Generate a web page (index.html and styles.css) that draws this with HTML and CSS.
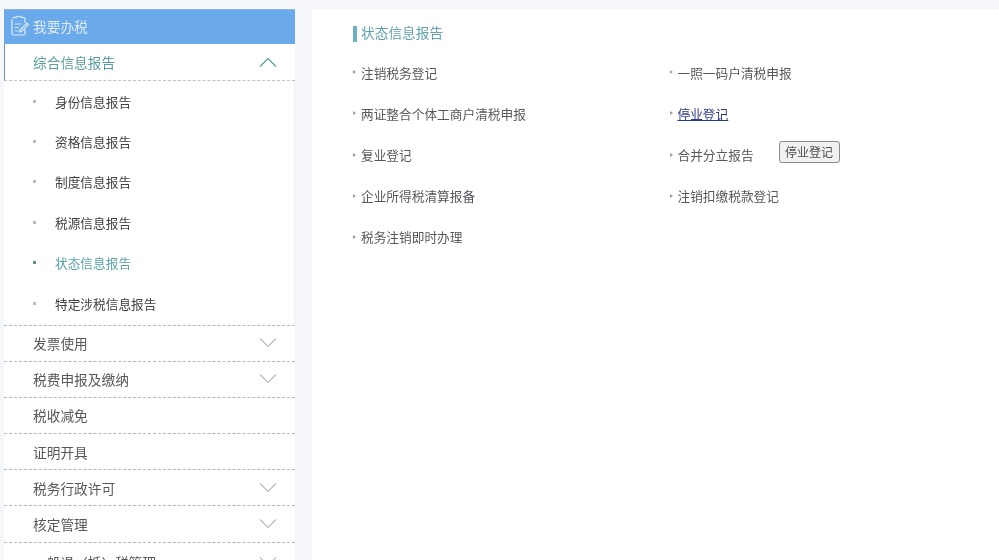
FILE: index.html
```html
<!DOCTYPE html>
<html lang="zh">
<head>
<meta charset="utf-8">
<title>我要办税</title>
<link rel="stylesheet" href="styles.css">
</head>
<body>
<div class="page">
  <aside class="side">
    <div class="side-head">
      <svg class="head-icon" width="20" height="22" viewBox="0 0 20 22" fill="none" stroke="#dcebfa" stroke-width="1.200"><path d="M4 3.500C4 2 6 2 7 2.500 8.500 1 11 1 12.500 2.500 14 2 16 2.500 16 4V8M16 14V18.500C16 19.500 15 20 14 20H5C4 20 3 19.500 3 18.500V4"/><path d="M6 9H12M6 12.500H10M6 16H9"/><path d="M11 15L18 8 19.500 9.500 12.500 16.500 10.500 17Z"/></svg>
      <span class="head-text">我要办税</span>
    </div>
    <div class="row row-open">
      <span>综合信息报告</span>
      <svg class="chev" width="18" height="10" viewBox="0 0 18 10" fill="none" stroke="#4f9a96" stroke-width="1.100"><path d="M1 9.500L9 1.500 17 9.500"/></svg>
    </div>
    <ul class="subs">
      <li>身份信息报告</li>
      <li>资格信息报告</li>
      <li>制度信息报告</li>
      <li>税源信息报告</li>
      <li class="on">状态信息报告</li>
      <li>特定涉税信息报告</li>
    </ul>
    <div class="row"><span>发票使用</span><svg class="chev" width="18" height="10" viewBox="0 0 18 10" fill="none" stroke="#b4bac4" stroke-width="1.100"><path d="M1 .5L9 8.500 17 .5"/></svg></div>
    <div class="row"><span>税费申报及缴纳</span><svg class="chev" width="18" height="10" viewBox="0 0 18 10" fill="none" stroke="#b4bac4" stroke-width="1.100"><path d="M1 .5L9 8.500 17 .5"/></svg></div>
    <div class="row"><span>税收减免</span></div>
    <div class="row"><span>证明开具</span></div>
    <div class="row"><span>税务行政许可</span><svg class="chev" width="18" height="10" viewBox="0 0 18 10" fill="none" stroke="#b4bac4" stroke-width="1.100"><path d="M1 .5L9 8.500 17 .5"/></svg></div>
    <div class="row"><span>核定管理</span><svg class="chev" width="18" height="10" viewBox="0 0 18 10" fill="none" stroke="#b4bac4" stroke-width="1.100"><path d="M1 .5L9 8.500 17 .5"/></svg></div>
    <div class="row row-last"><span>一般退（抵）税管理</span><svg class="chev" width="18" height="10" viewBox="0 0 18 10" fill="none" stroke="#b4bac4" stroke-width="1.100"><path d="M1 .5L9 8.500 17 .5"/></svg></div>
  </aside>
  <main class="main">
    <h2 class="title">状态信息报告</h2>
    <div class="grid">
      <div class="item">注销税务登记</div>
      <div class="item">一照一码户清税申报</div>
      <div class="item">两证整合个体工商户清税申报</div>
      <div class="item"><a class="link" href="#">停业登记</a></div>
      <div class="item">复业登记</div>
      <div class="item">合并分立报告<button class="btn" type="button">停业登记</button></div>
      <div class="item">企业所得税清算报备</div>
      <div class="item">注销扣缴税款登记</div>
      <div class="item">税务注销即时办理</div>
    </div>
  </main>
</div>
</body>
</html>
```
FILE: styles.css
```css
* { box-sizing: border-box; }
html, body { margin: 0; height: 100%; overflow: hidden; }
body {
  background: #f6f7fb;
  font-family: "Liberation Sans", "Noto Sans CJK SC", sans-serif;
  font-size: 12.7px;
  color: #4a4d52;
}
.page {
  display: flex;
  gap: 17px;
  height: 560px;
  padding: 9px 0 0 4px;
  overflow: hidden;
  filter: blur(0.35px);
}
.side {
  flex: 0 0 291px;
  background: #fff;
}
.side-head {
  height: 35px;
  display: flex;
  align-items: center;
  gap: 4px;
  padding-left: 5px;
  background: #6aa9ea;
  color: #dcebfa;
  font-size: 13.7px;
  box-shadow: inset 0 1px 0 #8db6dd;
}
.head-icon { flex: none; margin-top: -2px; }
.head-text { margin-top: -2px; }
.row {
  height: 36.2px;
  display: flex;
  align-items: center;
  justify-content: space-between;
  padding: 0 18px 0 29px;
  border-bottom: 1px dashed #aab8c8;
  color: #55585c;
  font-size: 13.7px;
}
.row-open {
  color: #5a9d9f;
  border-left: 1px solid #6f93b5;
  border-bottom-color: #b9c4c6;
  height: 37px;
  padding-left: 28px;
}
.row-last { border-bottom: 0; height: 38px; }
.chev { flex: none; }
.subs {
  list-style: none;
  margin: 0;
  padding: 0;
  height: 244.5px;
  border-bottom: 1px dashed #aab8c8;
  border-right: 1px solid #eef0f4;
}
.subs li {
  height: 40.4px;
  display: flex;
  align-items: center;
  gap: 20px;
  padding-left: 29px;
  color: #3f4145;
}
.subs li::before {
  content: "";
  width: 3px;
  height: 3px;
  background: #b8bbc0;
  flex: none;
  margin-right: -1px;
}
.subs li.on { color: #5ca3a8; }
.subs li.on::before { background: #5f8f93; }
.main {
  flex: 1;
  background: #fff;
  padding: 17px 0 0 41px;
}
.title {
  margin: 0 0 9px;
  height: 16px;
  line-height: 16px;
  font-size: 13.7px;
  font-weight: 400;
  color: #62a3ae;
  border-left: 4px solid #6fb0c4;
  padding-left: 4px;
}
.grid {
  display: grid;
  grid-template-columns: 316.500px 1fr;
  grid-auto-rows: 41.2px;
  align-items: center;
  padding-top: 0.6px;
}
.item {
  display: flex;
  align-items: center;
  color: #55585c;
}
.item::before {
  content: "";
  width: 0;
  height: 0;
  margin-right: 5px;
  border-left: 3px solid #9a9ea4;
  border-top: 2.5px solid transparent;
  border-bottom: 2.5px solid transparent;
  flex: none;
}
.link { color: #2c3a90; text-decoration: underline; }
.btn {
  height: 22px;
  width: 61px;
  padding: 0;
  margin: -6px 0 0 25px;
  background: #f1f1f1;
  border: 1px solid #8a8a8a;
  border-radius: 3px;
  font: inherit;
  font-size: 12px;
  color: #4a4d52;
}
```
